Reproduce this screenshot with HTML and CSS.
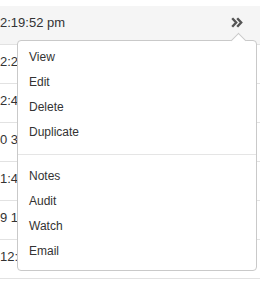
FILE: index.html
```html
<!DOCTYPE html>
<html>
<head>
<meta charset="utf-8">
<link rel="stylesheet" href="styles.css">
</head>
<body>
<div class="table">
  <div class="row row-active">
    <span class="cell">2:19:52 pm</span>
    <svg class="chev" width="12" height="11" viewBox="0 0 12 11"><path d="M1.2 1.2 L5.2 5.5 L1.2 9.8 M6.2 1.2 L10.2 5.5 L6.2 9.8" fill="none" stroke="#555" stroke-width="2.4"/></svg>
  </div>
  <div class="row"><span class="cell cell-clip">2:2</span></div>
  <div class="row"><span class="cell cell-clip">2:4</span></div>
  <div class="row"><span class="cell cell-clip">0 3:</span></div>
  <div class="row"><span class="cell cell-clip">1:4</span></div>
  <div class="row"><span class="cell cell-clip">9 1:</span></div>
  <div class="row"><span class="cell cell-clip">12:</span></div>

  <div class="menu">
    <span class="menu-arrow"></span>
    <ul class="menu-group">
      <li class="menu-item">View</li>
      <li class="menu-item">Edit</li>
      <li class="menu-item">Delete</li>
      <li class="menu-item">Duplicate</li>
    </ul>
    <div class="menu-divider"></div>
    <ul class="menu-group">
      <li class="menu-item">Notes</li>
      <li class="menu-item">Audit</li>
      <li class="menu-item">Watch</li>
      <li class="menu-item">Email</li>
    </ul>
  </div>
</div>
</body>
</html>
```

FILE: styles.css
```css
html, body {
  margin: 0;
  padding: 0;
  background: #fff;
}
body {
  font-family: "Liberation Sans", Arial, sans-serif;
  color: #333;
  padding-top: 6px;
}
.table {
  position: relative;
  width: 260px;
}
.row {
  box-sizing: border-box;
  height: 39px;
  border-bottom: 1px solid #e2e2e2;
  display: flex;
  align-items: flex-start;
  justify-content: space-between;
  padding-top: 8px;
  font-size: 13px;
  line-height: 18px;
  white-space: nowrap;
  overflow: hidden;
}
.row-active {
  background: #f5f5f5;
}
.cell {
  display: block;
}
.cell-clip {
  max-width: 17px;
  overflow: hidden;
}
.chev {
  margin-top: 3px;
  margin-right: 17px;
}
.menu {
  position: absolute;
  left: 17px;
  top: 34px;
  width: 240px;
  box-sizing: border-box;
  background: #fff;
  border: 1px solid #c9c9c9;
  border-radius: 4px;
  padding: 4px 0 6px;
}
.menu-arrow {
  position: absolute;
  top: -6.5px;
  right: 12.5px;
  width: 11px;
  height: 11px;
  box-sizing: border-box;
  background: #fff;
  border-top: 1px solid #c9c9c9;
  border-left: 1px solid #c9c9c9;
  transform: rotate(45deg);
}
.menu-group {
  list-style: none;
  margin: 0;
  padding: 0;
}
.menu-item {
  font-size: 12px;
  line-height: 25px;
  height: 25px;
  padding-left: 11px;
  color: #333;
}
.menu-divider {
  height: 1px;
  background: #e5e5e5;
  margin: 9px 0;
}
```
